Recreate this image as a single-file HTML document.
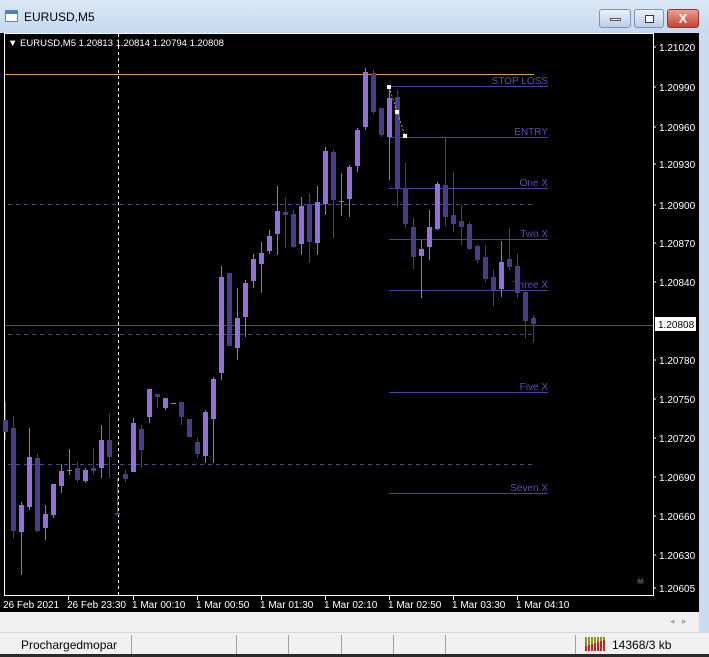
<!DOCTYPE html>
<html><head><meta charset="utf-8"><style>
*{margin:0;padding:0;box-sizing:border-box}
body{width:709px;height:657px;overflow:hidden;background:#c9dbef;font-family:"Liberation Sans",sans-serif;position:relative}
.title{position:absolute;left:0;top:0;width:709px;height:33px;background:linear-gradient(#dbe8f6,#c4d8ee)}
.title span{position:absolute;left:24px;top:10px;font-size:12px;color:#000}
.ico{position:absolute;left:5px;top:10px;width:13px;height:12px;background:#fff;border:1px solid #5a86b8}
.ico:before{content:"";position:absolute;left:0;top:0;width:11px;height:3px;background:#4a7fc0}
.btn{position:absolute;top:9px;height:19px;border:1px solid #7c94b4;border-radius:3px;background:linear-gradient(#e9f1fa,#bccde3)}
.win{position:absolute;left:0;top:33px;width:699px;height:579px;background:#000}
.bot{position:absolute;left:0;top:612px;width:699px;height:20px;background:#f0f0f0}
.status{position:absolute;left:0;top:632px;width:709px;height:22px;background:#f0f0f0;border-top:1px solid #d8d8d8;font-size:12px}
.status .sep{position:absolute;top:2px;width:1px;height:19px;background:#a0a0a0}
.darkbot{position:absolute;left:0;top:654px;width:709px;height:3px;background:#2a2a2a}
</style></head><body>
<div class="title"><div class="ico"></div><span>EURUSD,M5</span>
<div class="btn" style="left:599px;width:32px"><div style="position:absolute;left:10px;top:8px;width:11px;height:3px;background:#fff;border:1px solid #556"></div></div>
<div class="btn" style="left:634px;width:30px"><div style="position:absolute;left:10px;top:5px;width:9px;height:8px;border:1px solid #334;background:#fff"></div></div>
<div class="btn" style="left:667px;width:32px;background:linear-gradient(#e8a090,#c8422e);border-color:#8a3a30;color:#fff;font-weight:bold;font-size:13px;text-align:center;line-height:17px">X</div>
</div>
<div class="win">
<svg width="699" height="579" viewBox="0 33 699 579" xmlns="http://www.w3.org/2000/svg" style="position:absolute;left:0;top:0" font-family="Liberation Sans, sans-serif" font-size="10">
<rect x="4.5" y="33.5" width="649" height="562" fill="none" stroke="#fff"/>
<line x1="118.5" y1="34" x2="118.5" y2="595" stroke="#fff" stroke-dasharray="3,3"/>
<line x1="5" y1="74.5" x2="534" y2="74.5" stroke="#d8a040"/>
<line x1="5" y1="325.5" x2="653" y2="325.5" stroke="#555"/>
<g stroke="#4a4a8a" stroke-dasharray="4,4"><line x1="8" y1="204.5" x2="535" y2="204.5"/><line x1="8" y1="334.5" x2="535" y2="334.5"/><line x1="8" y1="464.5" x2="535" y2="464.5"/></g>
<g stroke="#4b3fa8"><line x1="389" y1="86.5" x2="548" y2="86.5"/><line x1="389" y1="137.5" x2="548" y2="137.5"/><line x1="389" y1="188.5" x2="548" y2="188.5"/><line x1="389" y1="239.5" x2="548" y2="239.5"/><line x1="389" y1="290.5" x2="548" y2="290.5"/><line x1="389" y1="392.5" x2="548" y2="392.5"/><line x1="389" y1="493.5" x2="548" y2="493.5"/></g>
<g fill="#5a50b0" text-anchor="end" font-size="10"><text x="548" y="84">STOP LOSS</text><text x="548" y="135">ENTRY</text><text x="548" y="186">One X</text><text x="548" y="237">Two X</text><text x="548" y="288">Three X</text><text x="548" y="390">Five X</text><text x="548" y="491">Seven X</text></g>
<g id="c"></g>
<line x1="389" y1="87" x2="405" y2="136" stroke="#aaa" stroke-dasharray="2,2"/>
<rect x="387" y="85" width="4" height="4" fill="#fff"/><rect x="395" y="110" width="4" height="4" fill="#fff"/><rect x="403" y="134" width="4" height="4" fill="#fff"/>
<text x="8" y="46" fill="#fff" font-size="9.5">▼ EURUSD,M5  1.20813 1.20814 1.20794 1.20808</text>
<g fill="#fff" font-size="10">
<text x="659" y="51">1.21020</text><text x="659" y="91">1.20990</text><text x="659" y="131">1.20960</text><text x="659" y="168">1.20930</text><text x="659" y="209">1.20900</text><text x="659" y="247">1.20870</text><text x="659" y="286">1.20840</text><text x="659" y="364">1.20780</text><text x="659" y="403">1.20750</text><text x="659" y="442">1.20720</text><text x="659" y="481">1.20690</text><text x="659" y="520">1.20660</text><text x="659" y="559">1.20630</text><text x="659" y="592">1.20605</text>
</g>
<rect x="655" y="317" width="41" height="14" fill="#fff"/><text x="658" y="328" fill="#000">1.20808</text>
<g stroke="#fff"><line x1="653" y1="47" x2="656" y2="47"/><line x1="653" y1="87" x2="656" y2="87"/><line x1="653" y1="127" x2="656" y2="127"/><line x1="653" y1="164" x2="656" y2="164"/><line x1="653" y1="205" x2="656" y2="205"/><line x1="653" y1="243" x2="656" y2="243"/><line x1="653" y1="282" x2="656" y2="282"/><line x1="653" y1="360" x2="656" y2="360"/><line x1="653" y1="399" x2="656" y2="399"/><line x1="653" y1="438" x2="656" y2="438"/><line x1="653" y1="477" x2="656" y2="477"/><line x1="653" y1="516" x2="656" y2="516"/><line x1="653" y1="555" x2="656" y2="555"/><line x1="653" y1="588" x2="656" y2="588"/></g>
<g fill="#fff" font-size="10"><text x="3" y="608">26 Feb 2021</text><text x="67" y="608">26 Feb 23:30</text><text x="132" y="608">1 Mar 00:10</text><text x="196" y="608">1 Mar 00:50</text><text x="260" y="608">1 Mar 01:30</text><text x="324" y="608">1 Mar 02:10</text><text x="388" y="608">1 Mar 02:50</text><text x="452" y="608">1 Mar 03:30</text><text x="516" y="608">1 Mar 04:10</text></g>
<g stroke="#fff"><line x1="68.5" y1="596" x2="68.5" y2="600"/><line x1="133.5" y1="596" x2="133.5" y2="600"/><line x1="197.5" y1="596" x2="197.5" y2="600"/><line x1="261.5" y1="596" x2="261.5" y2="600"/><line x1="325.5" y1="596" x2="325.5" y2="600"/><line x1="389.5" y1="596" x2="389.5" y2="600"/><line x1="453.5" y1="596" x2="453.5" y2="600"/><line x1="517.5" y1="596" x2="517.5" y2="600"/></g>
<text x="636" y="584" fill="#888" font-size="10">☠</text>
</svg>
</div>
<div class="bot"><span style="position:absolute;left:670px;top:4px;font-size:9px;color:#aaa">◂ &nbsp; ▸</span></div>
<div style="position:absolute;left:699px;top:33px;width:10px;height:599px;background:#c9dbef"></div>
<div class="status">
<span style="position:absolute;left:21px;top:5px">Prochargedmopar</span>
<div class="sep" style="left:131px"></div><div class="sep" style="left:236px"></div><div class="sep" style="left:288px"></div><div class="sep" style="left:341px"></div><div class="sep" style="left:393px"></div><div class="sep" style="left:445px"></div><div class="sep" style="left:575px"></div>
<svg width="22" height="14" style="position:absolute;left:585px;top:4px"><g fill="#8a9a20"><rect x="0" y="0" width="2" height="14"/><rect x="3" y="0" width="2" height="14"/><rect x="6" y="0" width="2" height="14"/><rect x="9" y="0" width="2" height="14"/><rect x="12" y="0" width="2" height="14"/><rect x="15" y="0" width="2" height="14"/><rect x="18" y="0" width="2" height="14"/></g><g fill="#c02020"><rect x="0" y="9" width="2" height="5"/><rect x="3" y="8" width="2" height="6"/><rect x="6" y="7" width="2" height="7"/><rect x="9" y="6" width="2" height="8"/><rect x="12" y="5" width="2" height="9"/><rect x="15" y="4" width="2" height="10"/><rect x="18" y="3" width="2" height="11"/></g></svg>
<span style="position:absolute;left:612px;top:5px">14368/3 kb</span>
</div>
<div class="darkbot"></div>
<script>
var d=[[5,420,432,402,440,0],[13,428,531,416,538,0],[21,505,532,502,575,1],[29,457,507,428,510,1],[37,458,531,454,532,0],[45,514,528,505,540,1],[53,484,515,484,518,1],[61,471,486,464,493,1],[69,470,471,449,475,2],[77,468,480,462,482,0],[85,470,481,468,483,1],[93,468,471,448,475,0],[101,440,468,425,478,1],[109,440,457,413,478,0],[117,513,515,478,515,0],[125,474,479,470,482,0],[133,423,472,418,472,1],[141,429,450,425,468,0],[149,389,417,389,423,1],[157,394,397,394,408,0],[165,398,408,398,410,1],[173,403,404,403,404,2],[181,402,417,402,425,0],[189,419,437,419,437,0],[197,442,454,438,458,0],[205,412,456,410,463,1],[213,379,419,377,463,1],[221,277,373,266,380,1],[229,273,346,273,346,0],[237,318,348,288,360,1],[245,283,317,280,337,1],[253,259,281,254,288,1],[261,253,264,242,293,1],[269,236,251,230,254,1],[277,211,234,186,255,1],[285,212,215,197,248,0],[293,214,247,210,248,0],[301,206,244,197,255,1],[309,204,242,193,263,0],[317,202,243,186,255,1],[325,151,204,147,215,1],[333,152,200,150,238,0],[341,201,202,173,216,2],[349,167,199,165,217,1],[357,130,166,128,172,1],[365,72,127,68,130,1],[373,73,112,70,114,0],[381,108,135,108,137,0],[389,98,137,85,180,1],[397,97,189,90,207,0],[405,188,224,163,228,0],[413,227,257,218,269,0],[421,249,256,240,298,1],[429,227,247,210,260,1],[437,184,229,182,230,1],[445,185,217,138,227,0],[453,215,224,172,232,0],[461,221,227,205,245,0],[469,224,249,222,250,0],[477,246,260,245,263,0],[485,257,279,245,282,0],[493,277,290,270,306,0],[501,262,289,241,297,1],[509,259,267,228,270,0],[517,266,293,254,298,0],[525,292,321,290,338,0],[533,318,324,315,343,0]];
var s='';d.forEach(function(c){var col=c[5]==1?'#9370db':c[5]==2?'#888':'#483d8b';
s+='<line x1="'+(c[0]+.5)+'" y1="'+c[3]+'" x2="'+(c[0]+.5)+'" y2="'+c[4]+'" stroke="'+col+'"/>';
s+='<rect x="'+(c[0]-2)+'" y="'+c[1]+'" width="5" height="'+Math.max(1,c[2]-c[1])+'" fill="'+col+'"/>';});
document.getElementById('c').innerHTML=s;
</script>
</body></html>
